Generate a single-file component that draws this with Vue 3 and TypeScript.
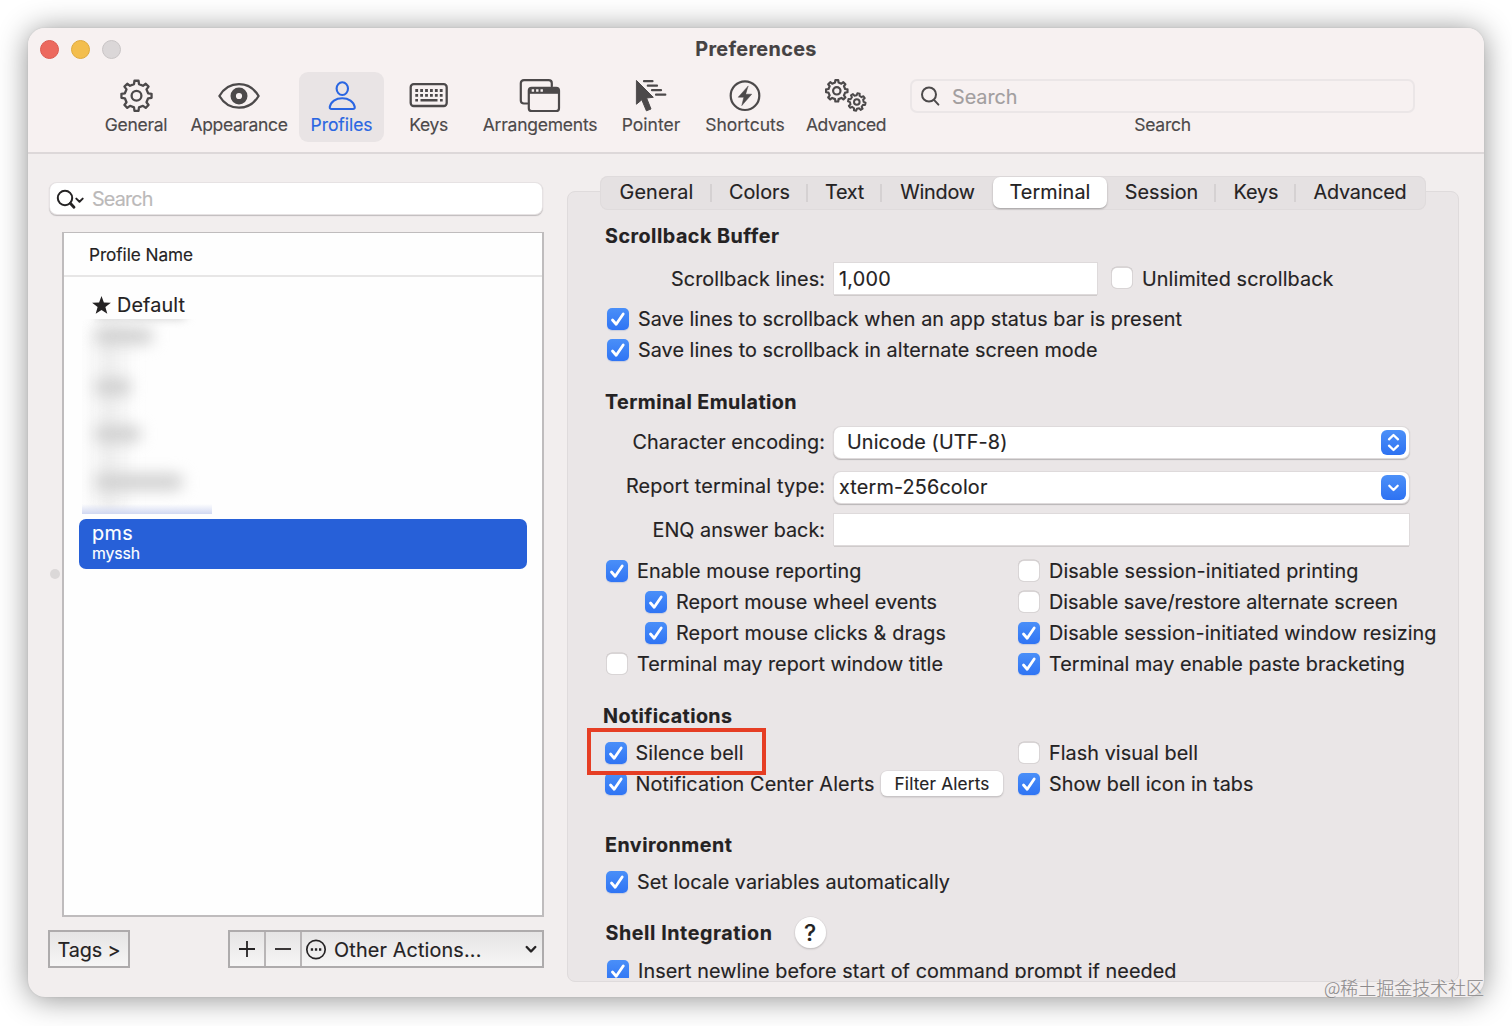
<script setup lang="ts">
import { defineComponent, h } from 'vue'

/* Tracks a label so that it fills the given width, whatever the fallback font is. */
const vFit = {
  mounted(el: HTMLElement, binding: { value: number }) {
    const count = (el.textContent ?? '').trim().length
    const natural = el.getBoundingClientRect().width
    if (count) el.style.letterSpacing = `${((binding.value - 1 - natural) / count).toFixed(3)}px`
  },
}

function gear(cx: number, cy: number, outer: number, inner: number, teeth: number, phase = 0): string {
  const step = (Math.PI * 2) / teeth
  const points: string[] = []
  for (let i = 0; i < teeth; i++) {
    const mid = i * step - Math.PI / 2 + phase
    const corners: [number, number][] = [
      [inner, -0.27],
      [outer, -0.17],
      [outer, 0.17],
      [inner, 0.27],
    ]
    for (const [r, k] of corners) {
      const a = mid + k * step
      points.push(`${(cx + r * Math.cos(a)).toFixed(2)} ${(cy + r * Math.sin(a)).toFixed(2)}`)
    }
  }
  return `M${points.join('L')}Z`
}

const bigGear = gear(22.5, 17.8, 15.2, 11.9, 8)
const midGear = gear(12.8, 12.8, 10.8, 8.5, 8)
const smallGear = gear(32.8, 24, 8.8, 6.8, 8, 0.2)

const CheckMark = defineComponent({
  props: { on: Boolean },
  setup: (props) => () =>
    h('span', { class: ['box', props.on && 'on'] }, [
      props.on
        ? h('svg', { width: 22, height: 22, viewBox: '0 0 22 22', fill: 'none' }, [
            h('path', {
              d: 'M5.500 12L9.200 16.200L16.200 6',
              stroke: '#fff',
              'stroke-width': 2.8,
              'stroke-linecap': 'round',
              'stroke-linejoin': 'round',
            }),
          ])
        : null,
    ]),
})

const tools = [
  { name: 'General', cls: 't-general', w: 63.5 },
  { name: 'Appearance', cls: 't-appearance', w: 98 },
  { name: 'Profiles', cls: 't-profiles', w: 63 },
  { name: 'Keys', cls: 't-keys', w: 39.5 },
  { name: 'Arrangements', cls: 't-arrangements', w: 115.5 },
  { name: 'Pointer', cls: 't-pointer', w: 59.5 },
  { name: 'Shortcuts', cls: 't-shortcuts', w: 80.5 },
  { name: 'Advanced', cls: 't-advanced', w: 81 },
]

const tabs = [
  { name: 'General', cls: 'b-general', w: 75, line: true },
  { name: 'Colors', cls: 'b-colors', w: 62, line: true },
  { name: 'Text', cls: 'b-text', w: 40, line: true },
  { name: 'Window', cls: 'b-window', w: 75.5, line: false },
  { name: 'Terminal', cls: 'b-terminal', w: 82, line: false },
  { name: 'Session', cls: 'b-session', w: 74.5, line: true },
  { name: 'Keys', cls: 'b-keys', w: 46, line: true },
  { name: 'Advanced', cls: 'b-advanced', w: 94, line: false },
]

const mouseRows = [
  { l: 'Enable mouse reporting', lw: 225.5, lon: true, sub: false, r: 'Disable session-initiated printing', rw: 310.5, ron: false },
  { l: 'Report mouse wheel events', lw: 262, lon: true, sub: true, r: 'Disable save/restore alternate screen', rw: 350, ron: false },
  { l: 'Report mouse clicks & drags', lw: 271, lon: true, sub: true, r: 'Disable session-initiated window resizing', rw: 388.5, ron: true },
  { l: 'Terminal may report window title', lw: 307, lon: false, sub: false, r: 'Terminal may enable paste bracketing', rw: 357, ron: true },
]
</script>

<template>
  <div class="stage">
    <div class="window">
      <header class="head">
        <div class="titlebar">
          <div class="lights"><i class="red"></i><i class="yellow"></i><i class="grey"></i></div>
          <b v-fit="122.500">Preferences</b>
        </div>
        <nav class="toolbar">
          <div v-for="t in tools" :key="t.name" class="tool" :class="[t.cls, { active: t.name === 'Profiles' }]">
            <svg class="glyph" width="44" height="36" viewBox="0 0 44 36" fill="none" stroke="currentColor" stroke-linejoin="round" stroke-linecap="round">
              <g v-if="t.name === 'General'" stroke-width="2.3">
                <path :d="bigGear" />
                <circle cx="22.500" cy="17.800" r="4.900" />
              </g>
              <g v-else-if="t.name === 'Appearance'" stroke-width="2.3">
                <path d="M2.4 18C7 10.200 14 6.200 22 6.200S37 10.200 41.600 18C37 25.800 30 29.700 22 29.700S7 25.800 2.400 18Z" />
                <circle cx="22" cy="18" r="5.8" stroke-width="5.4" />
              </g>
              <g v-else-if="t.name === 'Profiles'" stroke-width="2.1">
                <ellipse cx="22.300" cy="10.600" rx="5.700" ry="6.400" />
                <path d="M11.500 31H33Q35 31 34.700 28.800C33.700 23.500 28.600 20.200 22.200 20.200S10.800 23.500 9.800 28.800Q9.500 31 11.500 31Z" />
              </g>
              <g v-else-if="t.name === 'Keys'">
                <rect x="3.700" y="6.200" width="36" height="21.800" rx="3" stroke-width="2.3" />
                <path d="M8.300 12.500H36M8.300 17.300H36" stroke-width="2.800" stroke-dasharray="2.800 2.100" stroke-linecap="butt" />
                <path d="M8.300 22.200H11M13.500 22.200H30.500M33 22.200H35.700" stroke-width="2.600" stroke-linecap="butt" />
              </g>
              <g v-else-if="t.name === 'Arrangements'" stroke-width="2.2">
                <path d="M9.300 25.500H6Q2.800 25.500 2.800 22.400V5.200Q2.800 2.200 6 2.200H30.600Q33.800 2.200 33.800 5.200V8.300" />
                <rect x="10.800" y="9.800" width="30.200" height="23.200" rx="2.8" />
                <path d="M11 10H41V15.800H11Z" fill="currentColor" stroke="none" />
                <path d="M13.700 12.500H25" stroke="#f7f1f1" stroke-width="2.400" stroke-dasharray="2.400 2" stroke-linecap="butt" />
              </g>
              <g v-else-if="t.name === 'Pointer'">
                <path d="M15 3.200H23.500M18.800 7.700H28M23 12.200H32M27 16.700H36.300" stroke-width="2.2" />
                <path d="M7.700 2.700L24.300 19.300L17.600 20L22 31L17.400 32.800L12.800 21.800L7.700 26Z" fill="currentColor" stroke-width="1" />
              </g>
              <g v-else-if="t.name === 'Shortcuts'">
                <circle cx="22" cy="17.700" r="14.300" stroke-width="2.2" />
                <path d="M25 8.200L15.200 19.200H20.800L18.800 27.600L28.700 16.200H22.800Z" fill="currentColor" stroke-width="0.500" />
              </g>
              <g v-else stroke-width="2.2">
                <path :d="midGear" />
                <circle cx="12.800" cy="12.800" r="3.700" />
                <path :d="smallGear" stroke-width="2" />
                <circle cx="32.800" cy="24" r="2.800" stroke-width="2" />
              </g>
            </svg>
            <span v-fit="t.w">{{ t.name }}</span>
          </div>
          <div class="find">
            <div class="find-field">
              <svg width="22" height="22" viewBox="0 0 22 22" fill="none" stroke="#4d4a4b" stroke-width="2" stroke-linecap="round">
                <circle cx="9" cy="9.500" r="7" /><path d="M14 14.900L18.400 19.600" />
              </svg>
              <span v-fit="66.500">Search</span>
            </div>
            <em v-fit="57.500">Search</em>
          </div>
        </nav>
      </header>

      <main class="body">
        <aside class="side">
          <div class="side-find">
            <svg width="30" height="24" viewBox="0 0 30 24" fill="none" stroke="#252324" stroke-linecap="round" stroke-linejoin="round">
              <circle cx="9" cy="11" r="7.200" stroke-width="2" /><path d="M14.300 16.300L18 20.300" stroke-width="2.800" />
              <path d="M20.300 11.600L23.500 14.700L26.700 11.600" stroke-width="2" />
            </svg>
            <span v-fit="61.500">Search</span>
          </div>
          <div class="list-wrap">
            <i class="dot"></i>
            <div class="list">
              <div class="list-head"><span v-fit="105">Profile Name</span></div>
              <div class="default">
                <svg width="19" height="18" viewBox="0 0 19 18" fill="#252324"><path d="M9.500 0L11.900 6.400L18.900 6.700L13.400 11L15.300 17.700L9.500 13.900L3.700 17.700L5.600 11L.1 6.700L7.100 6.400Z" /></svg>
                <span v-fit="69">Default</span>
              </div>
              <div class="hidden-rows"><i class="haze"></i><i class="m0"></i><i class="m1"></i><i class="m2"></i><i class="m3"></i><i class="m4"></i><i class="edge"></i></div>
              <div class="selected">
                <span v-fit="42">pms</span>
                <small v-fit="49">myssh</small>
              </div>
            </div>
          </div>
          <div class="side-foot">
            <button class="tags"><span v-fit="64">Tags &gt;</span></button>
            <div class="group">
              <button class="sq"><svg width="18" height="18" viewBox="0 0 18 18" stroke="#252324" stroke-width="1.800"><path d="M1 9H17M9 1V17" /></svg></button>
              <button class="sq"><svg width="18" height="18" viewBox="0 0 18 18" stroke="#252324" stroke-width="1.800"><path d="M1 9H17" /></svg></button>
              <button class="other">
                <svg width="22" height="22" viewBox="0 0 22 22" fill="none" stroke="#252324" stroke-width="1.700"><circle cx="11" cy="11.500" r="9.200" /><path d="M5.800 11.500H16.300" stroke-width="2.300" stroke-dasharray="2.300 1.800" /></svg>
                <span v-fit="148.500">Other Actions...</span>
                <svg class="arr" width="12" height="10" viewBox="0 0 12 10" fill="none" stroke="#252324" stroke-width="2.400" stroke-linecap="round" stroke-linejoin="round"><path d="M1.700 3L6 7.500L10.300 3" /></svg>
              </button>
            </div>
          </div>
        </aside>

        <section class="main">
          <div class="tabs">
            <div v-for="t in tabs" :key="t.name" class="tab" :class="[t.cls, { line: t.line, current: t.name === 'Terminal' }]">
              <span v-fit="t.w">{{ t.name }}</span>
            </div>
          </div>
          <div class="panel">
            <div class="scroll">
              <h3 class="row s1"><span v-fit="175.500">Scrollback Buffer</span></h3>
              <div class="field f1">
                <label><span v-fit="155">Scrollback lines:</span></label>
                <div class="input short"><span v-fit="53">1,000</span></div>
                <CheckMark />
                <span v-fit="192.500" class="cap">Unlimited scrollback</span>
              </div>
              <div class="row c1"><CheckMark on /><span v-fit="545" class="cap">Save lines to scrollback when an app status bar is present</span></div>
              <div class="row"><CheckMark on /><span v-fit="460.500" class="cap">Save lines to scrollback in alternate screen mode</span></div>

              <h3 class="row s2"><span v-fit="193">Terminal Emulation</span></h3>
              <div class="field f2">
                <label><span v-fit="193.500">Character encoding:</span></label>
                <div class="input pop"><span v-fit="161.500">Unicode (UTF-8)</span>
                  <i class="knob"><svg width="25" height="25" viewBox="0 0 25 25" fill="none" stroke="#fff" stroke-width="2.300" stroke-linecap="round" stroke-linejoin="round"><path d="M8 9.300L12.500 5L17 9.300M8 15.700L12.500 20L17 15.700" /></svg></i>
                </div>
              </div>
              <div class="field f3">
                <label class="up"><span v-fit="200">Report terminal type:</span></label>
                <div class="input combo"><span v-fit="149.500">xterm-256color</span>
                  <i class="knob"><svg width="25" height="25" viewBox="0 0 25 25" fill="none" stroke="#fff" stroke-width="2.300" stroke-linecap="round" stroke-linejoin="round"><path d="M8.300 10.700L12.500 15L16.700 10.700" /></svg></i>
                </div>
              </div>
              <div class="field f4">
                <label><span v-fit="173.500">ENQ answer back:</span></label>
                <div class="input long"></div>
              </div>

              <div class="mouse">
                <div v-for="m in mouseRows" :key="m.l" class="row pair">
                  <div class="half" :class="{ sub: m.sub }"><CheckMark :on="m.lon" /><span v-fit="m.lw" class="cap">{{ m.l }}</span></div>
                  <CheckMark :on="m.ron" /><span v-fit="m.rw" class="cap">{{ m.r }}</span>
                </div>
              </div>

              <h3 class="row s3"><span v-fit="130.500">Notifications</span></h3>
              <div class="row pair c3">
                <div class="half notif"><CheckMark on /><span v-fit="109" class="cap">Silence bell</span><i class="mark"></i></div>
                <CheckMark /><span v-fit="150" class="cap">Flash visual bell</span>
              </div>
              <div class="row pair">
                <div class="half notif"><CheckMark on /><span v-fit="240" class="cap">Notification Center Alerts</span><button class="filter"><span v-fit="96">Filter Alerts</span></button></div>
                <CheckMark on /><span v-fit="205.500" class="cap">Show bell icon in tabs</span>
              </div>

              <h3 class="row s4"><span v-fit="128.500">Environment</span></h3>
              <div class="row c4"><CheckMark on /><span v-fit="314" class="cap">Set locale variables automatically</span></div>

              <h3 class="row s5"><span v-fit="168">Shell Integration</span><button class="help">?</button></h3>
              <div class="row c5"><CheckMark on /><span v-fit="539.500" class="cap">Insert newline before start of command prompt if needed</span></div>
            </div>
          </div>
        </section>
      </main>
    </div>
    <div class="wm"><span v-fit="161">@稀土掘金技术社区</span></div>
  </div>
</template>

<style>
body { background: #fff; }
.box {
  flex: none; display: block; width: 20px; height: 20px; margin: 1px; border-radius: 5px; background: #fff;
  box-shadow: 0 0 0 1px #d9d5d6, 0 -0.5px 0 1px #c9c5c6;
}
.box.on {
  width: 22px; height: 22px; margin: 0; border-radius: 5px; box-shadow: 0 1px 1px rgba(50, 100, 200, 0.2);
  background: linear-gradient(#4a8ff8, #2f74f4);
}
.box svg { display: block; }
</style>

<style scoped>
.stage {
  position: relative; box-sizing: border-box; width: 1512px; height: 1026px; padding: 28px; overflow: hidden;
  background: #fff; color: #242223; font-family: Inter, "Noto Sans CJK SC", sans-serif; font-size: 19.8px; line-height: 24px;
  -webkit-text-stroke: 0.15px currentColor;
}
.stage * { box-sizing: border-box; }
.stage span, .stage b, .stage em, .stage small { white-space: nowrap; }
button { margin: 0; padding: 0; border: 0; background: none; font: inherit; color: inherit; }
svg { flex: none; display: block; }
.window { width: 1456px; height: 969px; border-radius: 17px; background: #f2eeee; box-shadow: 0 2px 30px rgba(0, 0, 0, 0.44), 0 0 2px rgba(0, 0, 0, 0.1); }
.head { height: 126px; border-bottom: 2px solid #ddd8d9; border-radius: 17px 17px 0 0; background: #f7f1f1; }
.titlebar { position: relative; display: flex; justify-content: center; align-items: center; height: 44px; color: #454243; }
.titlebar b { padding-bottom: 2px; }
.lights { position: absolute; left: 12px; top: 12px; display: flex; gap: 12px; }
.lights i { width: 19px; height: 19px; border-radius: 50%; }
.red { background: #ec695e; border: 1px solid #dc5a50; }
.yellow { background: #f3be4e; border: 1px solid #dfaa3d; }
.grey { background: #dbd7d8; border: 1px solid #c9c5c6; }
.toolbar { display: flex; padding-left: 65px; font-size: 17.5px; line-height: 20px; color: #4c494a; }
.tool { display: flex; flex-direction: column; align-items: center; height: 70px; padding-top: 6px; border-radius: 9px; }
.tool span { margin-top: 1px; }
.active { background: #e9e4e5; color: #2a66e2; }
.t-general { width: 86px; }
.t-appearance { width: 120px; }
.t-profiles { width: 85px; }
.t-keys { width: 89px; }
.t-arrangements { width: 134px; }
.t-pointer { width: 88px; }
.t-shortcuts { width: 100px; }
.t-advanced { width: 102px; }
.find { display: flex; flex-direction: column; align-items: center; width: 505px; margin: 7px 0 0 13px; }
.find-field { display: flex; align-items: center; width: 100%; height: 34px; padding-left: 8px; border: 2px solid #ebe6e7; border-radius: 7px; font-size: 19.8px; }
.find-field span { margin-left: 10px; padding-top: 1px; color: #a29e9f; }
.find em { margin-top: 2px; font-style: normal; }
.body { display: flex; height: 843px; }
.side { width: 516px; padding: 29px 0 0 21px; }
.side-find { display: flex; align-items: center; width: 492px; height: 31px; margin-left: 1px; padding-left: 6px; border-radius: 7px; background: #fff; box-shadow: 0 0 0 1px #e6e2e3, 0 1px 1px 0.5px #bfbbbc; color: #bbb9b9; }
.side-find span { margin-left: 6px; }
.list-wrap { position: relative; margin: 18px 0 0 13px; }
.dot { position: absolute; left: -12px; top: 337px; width: 10px; height: 10px; border-radius: 50%; background: #dbd8d8; }
.list { width: 482px; height: 685px; border: 2px solid #bfbcbd; border-top-width: 1.5px; background: #fefefe; }
.list-head { height: 44px; padding: 9px 0 0 25px; border-bottom: 2px solid #e7e6e6; font-size: 17.2px; line-height: 26px; }
.default { display: flex; align-items: center; height: 41px; padding: 15px 0 0 28px; }
.default span { margin-left: 6px; }
.hidden-rows { position: relative; height: 195px; margin: 1px 0 5px 18px; width: 131px; overflow: hidden; isolation: isolate; }
.hidden-rows i { position: absolute; display: block; left: 13px; height: 16px; border-radius: 8px; background: #cecece; filter: blur(7.5px); }
.hidden-rows .m0 { top: -12px; width: 92px; height: 12px; background: #cfcfcf; filter: blur(5px); }
.hidden-rows .m1 { top: 9px; width: 58px; }
.hidden-rows .m2 { top: 60px; width: 36px; }
.hidden-rows .m3 { top: 107px; width: 46px; }
.hidden-rows .m4 { top: 155px; width: 88px; }
.hidden-rows .haze { top: 8px; left: 12px; width: 30px; height: 190px; background: #efefef; filter: blur(9px); }
.hidden-rows .edge { left: 0; bottom: 0; width: 130px; height: 10px; border-radius: 0; background: linear-gradient(rgba(210, 217, 243, 0), rgba(202, 210, 240, 0.85)); filter: none; }
.selected { display: flex; flex-direction: column; align-items: flex-start; width: 448px; height: 50px; margin-left: 15px; padding: 3px 0 0 13px; border-radius: 7px; background: #2760d8; color: #fff; line-height: 22px; }
.selected small { font-size: 15.8px; line-height: 20px; }
.side-foot { display: flex; justify-content: space-between; width: 496px; margin: 13px 0 0 -1px; }
.tags { width: 82px; height: 38px; padding-top: 1px; border: 2px solid #aeabac; background: linear-gradient(#e5e4e4, #f6f5f5); }
.group { display: flex; width: 316px; height: 38px; border: 2px solid #aeabac; background: linear-gradient(#e5e4e4, #f6f5f5); }
.sq { display: flex; align-items: center; justify-content: center; width: 36px; border-right: 2px solid #b8b5b6; }
.other { display: flex; align-items: center; flex: 1; padding: 0 5px 0 3px; }
.other span { margin-left: 7px; padding-top: 1px; }
.arr { margin-left: auto; }
.main { width: 892px; margin-left: 23px; padding-top: 22px; }
.tabs { position: relative; z-index: 1; display: flex; width: 826px; height: 34px; margin: 0 0 -19px 33px; border-radius: 8px; background: #e5e1e2; box-shadow: inset 0 0 0 1px #dfdbdc; }
.tab { position: relative; display: flex; align-items: center; justify-content: center; height: 32px; }
.tab.line::after { content: ""; position: absolute; right: 0; top: 8px; width: 2px; height: 18px; background: #d5d1d2; }
.current { margin-top: 1px; height: 31px; border-radius: 7px; background: #fff; box-shadow: 0 1px 2px rgba(0, 0, 0, 0.3); }
.current span { margin-top: -1px; }
.b-general { width: 112px; padding-left: 1px; }
.b-colors { width: 96px; padding-right: 1px; }
.b-text { width: 74px; padding-right: 1px; }
.b-window { width: 111px; }
.b-terminal { width: 114px; }
.b-session { width: 109px; }
.b-keys { width: 80px; }
.b-advanced { width: 130px; padding-right: 2px; }
.panel { height: 791px; border: 1px solid #dfdbdc; border-radius: 8px; background: #eae6e7; }
.scroll { height: 786px; overflow: hidden; }
.row { display: flex; align-items: center; height: 31px; margin: 0; padding-left: 39px; }
h3.row { padding-left: 37px; font-size: 19.7px; font-weight: 700; }
.cap { margin-left: 9px; padding-top: 1px; }
.s1 { margin-top: 27px; }
h3 span { padding-top: 1px; }
h3.s1 span, h3.s2 span { padding-top: 2px; }
.s2 { margin-top: 20px; }
.s3 { margin-top: 21px; }
h3.s3 { padding-left: 35px; }
.s4 { margin-top: 30px; }
.s5 { margin-top: 20px; }
.field { display: flex; align-items: center; height: 32px; }
.f1 { margin-top: 12px; }
.f2 { margin-top: 10px; }
.f3 { margin-top: 13px; }
.f4 { margin-top: 10px; }
.field label { display: flex; justify-content: flex-end; width: 257px; padding-top: 1px; margin-right: 9px; }
.f2 label { padding-top: 0; }
.field .up { margin-top: -3px; }
.input { display: flex; align-items: center; height: 31px; padding-left: 5px; background: #fff; box-shadow: 0 0 0 1px #dedadb, 0 1.5px 0 0 #b3afb0; }
.short { width: 263px; margin-right: 14px; }
.short span { padding-top: 2px; }
.long { width: 575px; }
.pop, .combo { width: 575px; padding-right: 3px; border-radius: 7px; box-shadow: 0 0 0 1px #dedadb, 0 1px 1px 0.5px #b9b5b6; }
.pop { padding-left: 13px; }
.pop span { margin-top: -1px; }
.knob { width: 25px; height: 25px; margin-left: auto; border-radius: 6px; background: linear-gradient(#4c90f8, #2e72f2); }
.c1 { margin-top: 9px; }
.mouse { margin-top: 10px; }
.pair { padding-left: 38px; }
.half { position: relative; display: flex; align-items: center; flex: none; width: 412px; }
.half.sub { padding-left: 39px; }
.half.notif { width: 413.5px; margin-left: -1.5px; }
.c3 { margin-top: 6px; }
.mark { position: absolute; left: -17.5px; top: -12px; width: 179px; height: 47px; border: 4.5px solid #e63e24; z-index: 2; }
.filter { display: flex; align-items: center; justify-content: center; width: 122px; height: 25px; margin-left: 6.5px; border-radius: 6px; background: #fff; font-size: 17.2px; box-shadow: 0 0 0 0.5px #d8d4d5, 0 1px 2px rgba(0, 0, 0, 0.28); }
.c4 { margin-top: 6px; padding-left: 38px; }
h3.s5 { padding-left: 37.5px; }
.help { width: 31px; height: 31px; margin-left: 22px; border-radius: 50%; background: #fff; font-size: 23px; font-weight: 500; box-shadow: 0 0 0 0.5px #d8d4d5, 0 1px 2px rgba(0, 0, 0, 0.25); }
.c5 { margin-top: 7px; }
.wm { position: absolute; right: 28px; bottom: 27px; font-family: "Noto Sans CJK SC", sans-serif; font-size: 18px; font-weight: 300; color: #8d8a8b; text-shadow: 0 0 1px #fff; }
</style>
